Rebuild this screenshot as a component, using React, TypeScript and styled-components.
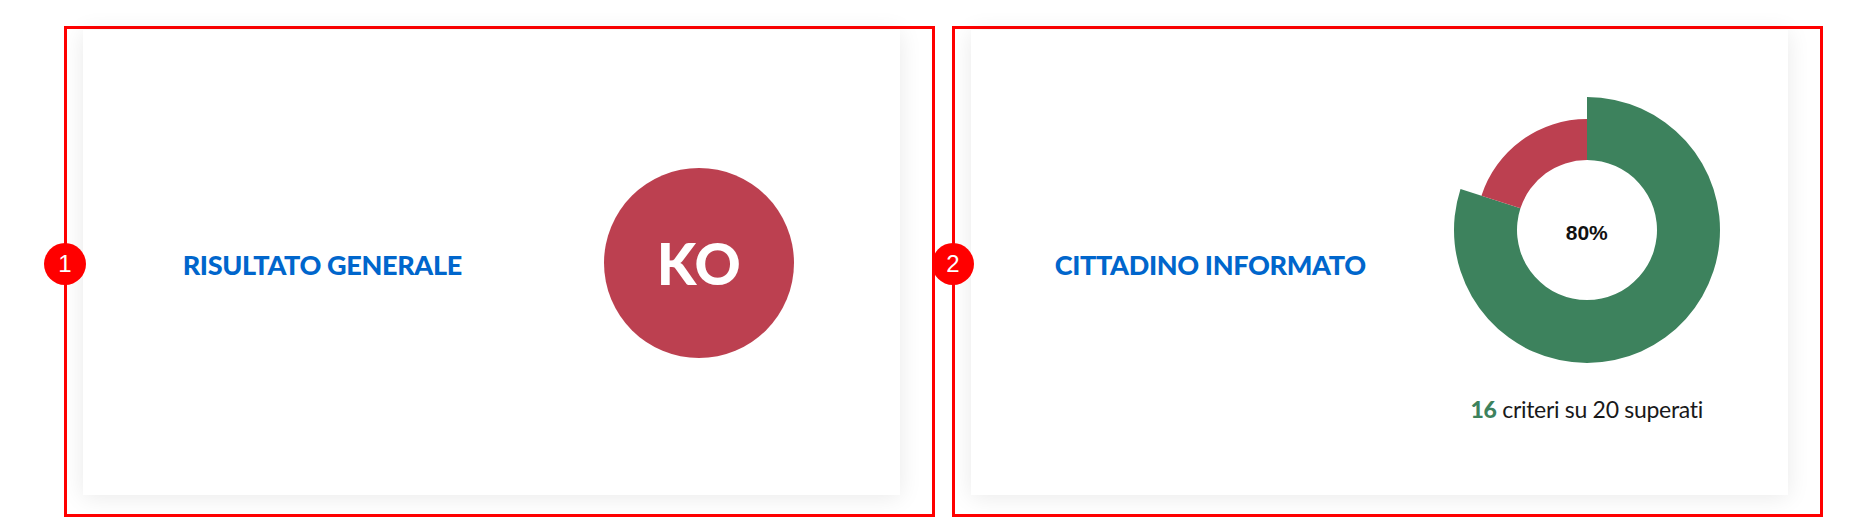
import styled, { createGlobalStyle } from "styled-components";

const GlobalStyle = createGlobalStyle`
  html, body {
    margin: 0;
    padding: 0;
    background: #ffffff;
  }
  body {
    font-family: Lato, "Open Sans", sans-serif;
  }
`;

const RED = "#bc4050";
const GREEN = "#3d825d";

type Slice = { from: number; to: number; outer: number; inner: number; color: string };

const CX = 140;
const CY = 140;

const polar = (r: number, deg: number) => {
  const a = (deg * Math.PI) / 180;
  return `${(CX + r * Math.sin(a)).toFixed(2)} ${(CY - r * Math.cos(a)).toFixed(2)}`;
};

const slicePath = (s: Slice) => {
  const large = s.to - s.from > 180 ? 1 : 0;
  return [
    `M ${polar(s.outer, s.from)}`,
    `A ${s.outer} ${s.outer} 0 ${large} 1 ${polar(s.outer, s.to)}`,
    `L ${polar(s.inner, s.to)}`,
    `A ${s.inner} ${s.inner} 0 ${large} 0 ${polar(s.inner, s.from)}`,
    "Z",
  ].join(" ");
};

function Doughnut({ passed, total }: { passed: number; total: number }) {
  const split = (passed / total) * 360;
  const slices: Slice[] = [
    { from: 0, to: split, outer: 133, inner: 70, color: GREEN },
    { from: split, to: 360, outer: 111, inner: 70, color: RED },
  ];
  return (
    <ChartBox>
      <svg width="280" height="280" viewBox="0 0 280 280">
        {slices.map((s, i) => (
          <path key={i} d={slicePath(s)} fill={s.color} />
        ))}
      </svg>
      <Percent>{Math.round((passed / total) * 100)}%</Percent>
    </ChartBox>
  );
}

export default function App() {
  return (
    <>
      <GlobalStyle />
      <Page>
        <Column>
          <Badge>1</Badge>
          <Card>
            <TitleCell>
              <Title>RISULTATO GENERALE</Title>
            </TitleCell>
            <ResultCell>
              <KoCircle>KO</KoCircle>
            </ResultCell>
          </Card>
        </Column>
        <Column>
          <Badge>2</Badge>
          <Card>
            <TitleCell>
              <Title>CITTADINO INFORMATO</Title>
            </TitleCell>
            <ResultCell $stacked>
              <Doughnut passed={16} total={20} />
              <Legend>
                <strong>16</strong> criteri su 20 superati
              </Legend>
            </ResultCell>
          </Card>
        </Column>
      </Page>
    </>
  );
}

const Page = styled.div`
  display: flex;
  gap: 17px;
  padding: 26px 0 0 64px;
  height: 525px;
  box-sizing: border-box;
`;

const Column = styled.div`
  position: relative;
  width: 871px;
  height: 491px;
  box-sizing: border-box;
  border: 3px solid #ff0000;
  padding: 1px 32px 19px 16px;
`;

const Badge = styled.div`
  position: absolute;
  left: -23px;
  top: 214px;
  width: 42px;
  height: 42px;
  border-radius: 50%;
  background: #ff0000;
  color: #ffffff;
  display: flex;
  align-items: center;
  justify-content: center;
  font-family: "Liberation Sans", Arial, sans-serif;
  font-size: 24px;
  z-index: 2;
`;

const Card = styled.div`
  height: 100%;
  background: #ffffff;
  box-shadow: 0 2px 22px rgba(0, 0, 0, 0.09);
  display: grid;
  grid-template-columns: 1fr 1fr;
`;

const TitleCell = styled.div`
  display: flex;
  align-items: center;
  justify-content: center;
  padding-left: 70px;
  padding-top: 3px;
`;

const Title = styled.h2`
  margin: 0;
  font-family: Lato, "Open Sans", sans-serif;
  font-weight: 900;
  font-size: 27px;
  letter-spacing: -0.35px;
  color: #0066cc;
  white-space: nowrap;
`;

const ResultCell = styled.div<{ $stacked?: boolean }>`
  display: flex;
  flex-direction: ${(p) => (p.$stacked ? "column" : "row")};
  align-items: center;
  justify-content: center;
  padding-bottom: ${(p) => (p.$stacked ? "11px" : "0")};
  padding-left: 6px;
`;

const KoCircle = styled.div`
  width: 190px;
  height: 190px;
  border-radius: 50%;
  background: ${RED};
  color: #ffffff;
  display: flex;
  align-items: center;
  justify-content: center;
  font-family: Lato, "Open Sans", sans-serif;
  font-weight: 900;
  font-size: 57px;
  letter-spacing: 0;
`;

const ChartBox = styled.div`
  position: relative;
  width: 280px;
  height: 280px;

  svg {
    display: block;
  }
`;

const Percent = styled.span`
  position: absolute;
  inset: 0;
  display: flex;
  align-items: center;
  justify-content: center;
  padding-top: 5px;
  font-family: "Liberation Sans", Arial, sans-serif;
  font-weight: 700;
  font-size: 21px;
  color: #111111;
`;

const Legend = styled.p`
  margin: 24px 0 0;
  font-family: Lato, "Open Sans", sans-serif;
  font-size: 23px;
  line-height: 30px;
  letter-spacing: -0.3px;
  color: #19191a;

  strong {
    color: ${GREEN};
    font-weight: 900;
  }
`;
